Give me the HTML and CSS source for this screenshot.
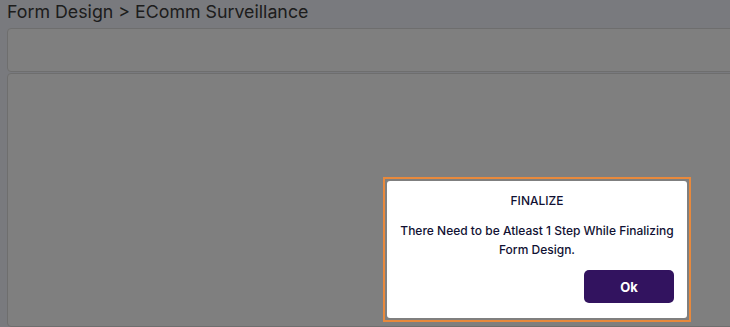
FILE: index.html
```html
<!DOCTYPE html>
<html>
<head>
<meta charset="utf-8">
<link rel="stylesheet" href="styles.css">
</head>
<body>
<div class="page">
  <div class="crumb">Form Design &gt; EComm Surveillance</div>
  <div class="card toolbar"></div>
  <div class="card content"></div>
</div>
<div class="overlay"></div>
<div class="dialog-wrap">
  <div class="dialog">
    <div class="dlg-title">FINALIZE</div>
    <div class="dlg-msg">There Need to be Atleast 1 Step While Finalizing Form Design.</div>
    <div class="dlg-actions"><button class="ok-btn">Ok</button></div>
  </div>
</div>
</body>
</html>
```
FILE: styles.css
```css
html, body { margin: 0; padding: 0; }
body {
  width: 730px; height: 327px; overflow: hidden;
  background: #f3f5fc;
  font-family: Inter, "Noto Sans", sans-serif;
}
.page {
  height: 327px; box-sizing: border-box;
  padding: 0 0 0 7px; display: flex; flex-direction: column;
}
.crumb {
  height: 28px; line-height: 23px;
  font-size: 17.8px; color: #3a3a3a;
}
.card {
  background: #fff; border: 1px solid #dcdcdc; border-radius: 4px;
  margin-right: -20px;
}
.toolbar { height: 42px; }
.content { flex: 1; margin-top: 1px; }
.overlay { position: fixed; inset: 0; background: rgba(0,0,0,0.5); }
.dialog-wrap {
  position: absolute; left: 383px; top: 177px;
  border: 2px solid #e8893c; padding: 2px;
}
.dialog {
  width: 300px; height: 137px; box-sizing: border-box;
  background: #fff; border-radius: 3px;
  padding: 12px 10px 0;
  color: #111133; text-align: center;
}
.dlg-title { font-size: 12px; font-weight: 500; line-height: 16px; }
.dlg-msg { font-size: 12px; font-weight: 500; line-height: 19px; margin-top: 12px; }
.dlg-actions { display: flex; justify-content: flex-end; margin-top: 11px; padding-right: 3px; }
.ok-btn {
  width: 90px; height: 33px; border: none; border-radius: 5px;
  background: #32135f; color: #fff;
  font-family: Inter, sans-serif; font-size: 13px; font-weight: 700;
}
```
